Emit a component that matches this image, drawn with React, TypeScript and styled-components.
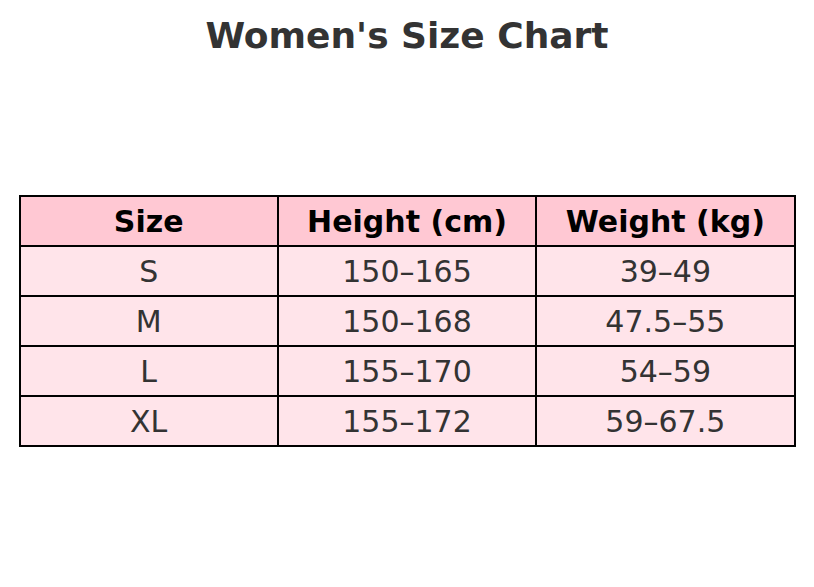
import React from 'react';
import styled, { createGlobalStyle } from 'styled-components';

const GlobalStyle = createGlobalStyle`
    html, body {
        margin: 0;
        padding: 0;
        background: #ffffff;
    }
    body {
        font-family: 'DejaVu Sans', 'Liberation Sans', sans-serif;
    }
`;

const Page = styled.div`
    width: 814px;
    height: 587px;
    display: flex;
    flex-direction: column;
    align-items: center;
`;

const Title = styled.h1`
    margin: 16px 0 0;
    font-size: 36px;
    line-height: 40px;
    font-weight: bold;
    color: #333333;
`;

const Table = styled.table`
    margin-top: 139px;
    width: 777px;
    border-collapse: collapse;
    table-layout: fixed;
    border: 2px solid #000;
`;

const Cell = styled.td<{ $head?: boolean }>`
    height: 48px;
    padding: 0;
    border: 2px solid #000;
    text-align: center;
    vertical-align: middle;
    font-size: 30px;
    font-weight: ${(p) => (p.$head ? 'bold' : 'normal')};
    color: ${(p) => (p.$head ? '#000000' : '#333333')};
    background: ${(p) => (p.$head ? '#ffc8d3' : '#ffe4ea')};
`;

const headers = ['Size', 'Height (cm)', 'Weight (kg)'];
const rows = [
    ['S', '150–165', '39–49'],
    ['M', '150–168', '47.5–55'],
    ['L', '155–170', '54–59'],
    ['XL', '155–172', '59–67.5'],
];

const App = () => {
    return (
        <>
            <GlobalStyle />
            <Page>
                <Title>Women's Size Chart</Title>
                <Table>
                    <tbody>
                        <tr>
                            {headers.map((h) => (
                                <Cell as="th" $head key={h}>
                                    {h}
                                </Cell>
                            ))}
                        </tr>
                        {rows.map((r) => (
                            <tr key={r[0]}>
                                {r.map((c, i) => (
                                    <Cell key={i}>{c}</Cell>
                                ))}
                            </tr>
                        ))}
                    </tbody>
                </Table>
            </Page>
        </>
    );
};

export default App;
